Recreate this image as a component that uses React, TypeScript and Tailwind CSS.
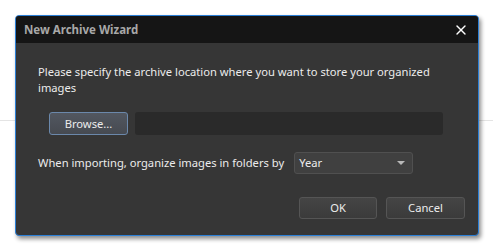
import { X } from "lucide-react";

export default function App() {
  return (
    <div
      className="relative h-[250px] w-[493px] overflow-hidden bg-white"
      style={{ fontFamily: '"Noto Sans", "Open Sans", sans-serif' }}
    >
      {/* faint page line behind the dialog */}
      <div className="absolute left-0 right-0 top-[120px] h-px bg-[#e4e4e4]" />

      <div className="absolute left-[15px] top-[15px] flex h-[221px] w-[464px] flex-col overflow-hidden rounded-[4px] border border-[#2b7fd6] bg-[#363636] shadow-[2px_3px_4px_rgba(0,0,0,0.45)]">
        <div className="flex h-[27px] shrink-0 items-center justify-between bg-[#151515] pl-[8px] pr-[9px]">
          <span className="text-[11.5px] font-bold text-[#a8a8a8]">New Archive Wizard</span>
          <X className="h-[16px] w-[16px] text-white" strokeWidth={2} />
        </div>

        <div className="flex flex-col whitespace-nowrap px-[22px] pt-[21px] text-[11.2px] leading-[16px] text-[#ececec]">
          <p>
            Please specify the archive location where you want to store your organized
            <br />
            images
          </p>

          <div className="mt-[16px] flex items-center gap-[7px] pl-[11px]">
            <button className="flex h-[23px] w-[79px] items-center justify-center rounded-[3px] border border-[#6b88ab] bg-gradient-to-b from-[#525760] to-[#464a51] text-[#ececec]">
              Browse...
            </button>
            <div className="h-[23px] w-[308px] rounded-[3px] bg-[#2a2a2a]" />
          </div>

          <div className="mt-[17px] flex items-center gap-[10px]">
            <span>When importing, organize images in folders by</span>
            <div className="flex h-[22px] w-[119px] items-center justify-between rounded-[3px] border border-[#505050] bg-[#404040] pl-[4px] pr-[7px]">
              <span>Year</span>
              <span className="h-0 w-0 border-x-[4px] border-t-[4px] border-x-transparent border-t-[#b8b8b8]" />
            </div>
          </div>

          <div className="mt-[23px] flex justify-end gap-[9px]">
            <button className="flex h-[22px] w-[78px] items-center justify-center rounded-[3px] border border-[#555] bg-gradient-to-b from-[#454545] to-[#3b3b3b] text-[#ececec]">
              OK
            </button>
            <button className="mr-[-9px] flex h-[22px] w-[79px] items-center justify-center rounded-[3px] border border-[#555] bg-gradient-to-b from-[#454545] to-[#3b3b3b] text-[#ececec]">
              Cancel
            </button>
          </div>
        </div>
      </div>
    </div>
  );
}
